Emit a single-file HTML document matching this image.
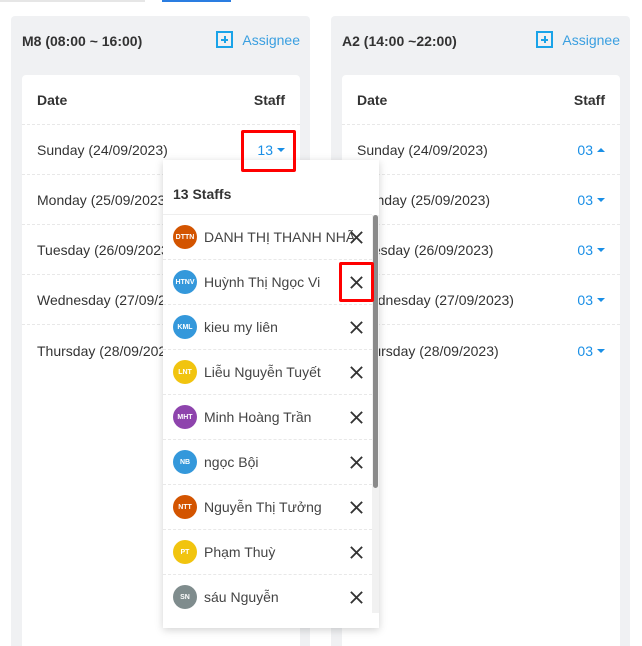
<!DOCTYPE html>
<html><head><meta charset="utf-8"><style>
*{box-sizing:border-box;margin:0;padding:0}
html,body{width:642px;height:646px;overflow:hidden}
body{background:#fff;font-family:"Liberation Sans","DejaVu Sans",sans-serif;position:relative;color:#333}
.abs{position:absolute}
.panel{position:absolute;top:16px;width:299px;height:630px;background:#f0f1f3;border-radius:4px 4px 0 0}
.title{position:absolute;left:11px;top:17px;font-size:14px;font-weight:bold;color:#333}
.assg{position:absolute;right:10px;top:15px;font-size:14px;color:#3a9fe0;display:flex;align-items:center;gap:9px}
.plus{width:17px;height:17px;border:2px solid #1aa3e8;position:relative}
.plus:before{content:"";position:absolute;left:3px;top:5.5px;width:7px;height:2px;background:#1aa3e8}
.plus:after{content:"";position:absolute;left:5.5px;top:3px;width:2px;height:7px;background:#1aa3e8}
.card{position:absolute;left:11px;top:59px;width:278px;height:600px;background:#fff;border-radius:4px}
.row{position:absolute;left:0;width:278px;height:50px;border-bottom:1px dashed #e8e8e8;font-size:14px;display:flex;align-items:center;justify-content:space-between;padding:1px 15px 0}
.hd{font-weight:bold;color:#333}
.cnt{color:#1a8fe6;display:flex;align-items:center;gap:4px}
.tri{width:0;height:0;border-left:4px solid transparent;border-right:4px solid transparent;border-top:4px solid #1a8fe6}
.triu{border-top:0;border-bottom:4px solid #1a8fe6}
.pop{position:absolute;left:163px;top:160px;width:216px;height:468px;background:#fff;box-shadow:0 2px 8px rgba(0,0,0,.18)}
.pop .h{position:absolute;left:10px;top:26px;font-size:14px;font-weight:bold;color:#333}
.it{position:absolute;left:0;width:209px;height:45px;border-top:1px dashed #e8e8e8;display:flex;align-items:center;padding-left:10px;font-size:14px;color:#444}
.av{width:24px;height:24px;border-radius:50%;color:#fff;font-size:7px;font-weight:bold;display:flex;align-items:center;justify-content:center;margin-right:7px;flex:none}
.nm{white-space:nowrap;overflow:hidden;width:150px}
.x{position:absolute;left:186px;top:15px;width:15px;height:15px}
.red{position:absolute;border:3px solid #f00;border-radius:2px}
</style></head><body>
<div class="abs" style="left:0;top:0;width:145px;height:2px;background:#e6e6e6"></div>
<div class="abs" style="left:162px;top:0;width:69px;height:2px;background:#2a7de1"></div>

<div class="panel" style="left:11px">
 <div class="title">M8 (08:00 ~ 16:00)</div>
 <div class="assg"><div class="plus"></div>Assignee</div>
 <div class="card">
  <div class="row hd" style="top:0"><span>Date</span><span>Staff</span></div>
  <div class="row" style="top:50px"><span>Sunday (24/09/2023)</span><span class="cnt">13<i class="tri"></i></span></div>
  <div class="row" style="top:100px"><span>Monday (25/09/2023)</span><span class="cnt">03<i class="tri"></i></span></div>
  <div class="row" style="top:150px"><span>Tuesday (26/09/2023)</span><span class="cnt">03<i class="tri"></i></span></div>
  <div class="row" style="top:200px"><span>Wednesday (27/09/2023)</span><span class="cnt">03<i class="tri"></i></span></div>
  <div class="row" style="top:250px;border:0"><span>Thursday (28/09/2023)</span><span class="cnt">03<i class="tri"></i></span></div>
 </div>
</div>
<div class="panel" style="left:331px">
 <div class="title">A2 (14:00 ~22:00)</div>
 <div class="assg"><div class="plus"></div>Assignee</div>
 <div class="card">
  <div class="row hd" style="top:0"><span>Date</span><span>Staff</span></div>
  <div class="row" style="top:50px"><span>Sunday (24/09/2023)</span><span class="cnt">03<i class="tri triu"></i></span></div>
  <div class="row" style="top:100px"><span>Monday (25/09/2023)</span><span class="cnt">03<i class="tri"></i></span></div>
  <div class="row" style="top:150px"><span>Tuesday (26/09/2023)</span><span class="cnt">03<i class="tri"></i></span></div>
  <div class="row" style="top:200px"><span>Wednesday (27/09/2023)</span><span class="cnt">03<i class="tri"></i></span></div>
  <div class="row" style="top:250px;border:0"><span>Thursday (28/09/2023)</span><span class="cnt">03<i class="tri"></i></span></div>
 </div>
</div>

<div class="pop">
 <div class="h">13 Staffs</div>
 <div class="it" style="top:54px;border-top:1px solid #eee"><div class="av" style="background:#d35400">DTTN</div><span class="nm">DANH THỊ THANH NHÃ</span><svg class="x" viewBox="0 0 16 16"><path d="M2 2L14 14M14 2L2 14" stroke="#333" stroke-width="2"/></svg></div>
 <div class="it" style="top:99px"><div class="av" style="background:#3498db">HTNV</div><span class="nm">Huỳnh Thị Ngọc Vi</span><svg class="x" viewBox="0 0 16 16"><path d="M2 2L14 14M14 2L2 14" stroke="#333" stroke-width="2"/></svg></div>
 <div class="it" style="top:144px"><div class="av" style="background:#3498db">KML</div><span class="nm">kieu my liên</span><svg class="x" viewBox="0 0 16 16"><path d="M2 2L14 14M14 2L2 14" stroke="#333" stroke-width="2"/></svg></div>
 <div class="it" style="top:189px"><div class="av" style="background:#f1c40f">LNT</div><span class="nm">Liễu Nguyễn Tuyết</span><svg class="x" viewBox="0 0 16 16"><path d="M2 2L14 14M14 2L2 14" stroke="#333" stroke-width="2"/></svg></div>
 <div class="it" style="top:234px"><div class="av" style="background:#8e44ad">MHT</div><span class="nm">Minh Hoàng Trần</span><svg class="x" viewBox="0 0 16 16"><path d="M2 2L14 14M14 2L2 14" stroke="#333" stroke-width="2"/></svg></div>
 <div class="it" style="top:279px"><div class="av" style="background:#3498db">NB</div><span class="nm">ngọc Bội</span><svg class="x" viewBox="0 0 16 16"><path d="M2 2L14 14M14 2L2 14" stroke="#333" stroke-width="2"/></svg></div>
 <div class="it" style="top:324px"><div class="av" style="background:#d35400">NTT</div><span class="nm">Nguyễn Thị Tưởng</span><svg class="x" viewBox="0 0 16 16"><path d="M2 2L14 14M14 2L2 14" stroke="#333" stroke-width="2"/></svg></div>
 <div class="it" style="top:369px"><div class="av" style="background:#f1c40f">PT</div><span class="nm">Phạm Thuỳ</span><svg class="x" viewBox="0 0 16 16"><path d="M2 2L14 14M14 2L2 14" stroke="#333" stroke-width="2"/></svg></div>
 <div class="it" style="top:414px"><div class="av" style="background:#7f8c8d">SN</div><span class="nm">sáu Nguyễn</span><svg class="x" viewBox="0 0 16 16"><path d="M2 2L14 14M14 2L2 14" stroke="#333" stroke-width="2"/></svg></div>
 <div class="abs" style="left:209px;top:55px;width:7px;height:398px;background:#f1f1f1"></div>
 <div class="abs" style="left:210px;top:55px;width:5px;height:273px;background:#8a8a8a;border-radius:3px"></div>
</div>

<div class="red" style="left:241px;top:130px;width:55px;height:42px"></div>
<div class="red" style="left:339px;top:262px;width:35px;height:40px"></div>
</body></html>
